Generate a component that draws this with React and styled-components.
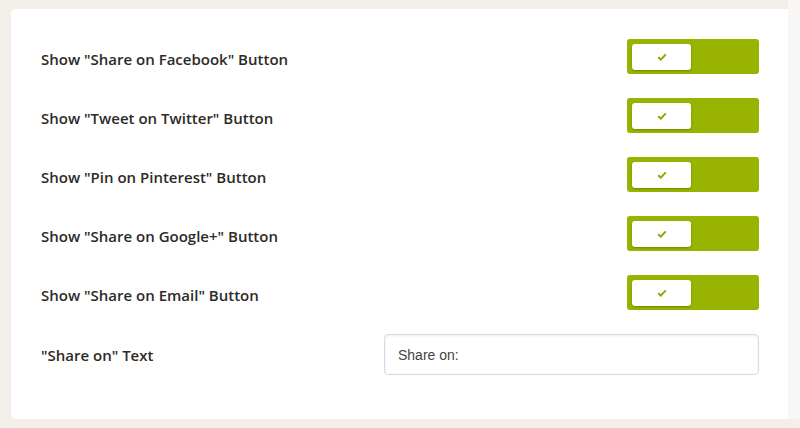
import React from 'react';
import styled, { createGlobalStyle } from 'styled-components';

const Global = createGlobalStyle`
  html, body {
    margin: 0;
    padding: 0;
    background: #f3f0ea;
  }
  body {
    font-family: "Open Sans", "Liberation Sans", sans-serif;
  }
`;

const Page = styled.div`
  display: flex;
  padding: 9px 0 9px 11px;
  min-height: 428px;
  box-sizing: border-box;
`;

const Card = styled.div`
  flex: 0 0 777px;
  background: #fff;
  border-radius: 5px 0 0 5px;
  padding: 30px 29px 44px 30px;
  box-sizing: border-box;
  display: flex;
  flex-direction: column;
  gap: 24px;
`;

const Gutter = styled.div`
  flex: 1;
  background: #f9f7f5;
  margin: -9px 0 0 0;
  height: 419px;
`;

const Label = styled.div`
  font-size: 15px;
  font-weight: 600;
  color: #2e2a26;
  padding-top: 5px;
`;

const Row = styled.div`
  display: flex;
  align-items: center;
  justify-content: space-between;
  height: ${p => (p.$tall ? 41 : 35)}px;

  ${Label} {
    padding-top: ${p => (p.$tall ? 0 : 5)}px;
  }
`;

const Toggle = styled.button`
  width: 132px;
  height: 35px;
  border: none;
  border-radius: 3px;
  background: #98b300;
  padding: 4px 5px;
  display: flex;
  align-items: center;
  cursor: pointer;
`;

const Knob = styled.span`
  width: 59px;
  height: 26px;
  background: #fff;
  border-radius: 3px;
  box-shadow: 0 1px 2px rgba(0, 0, 0, 0.25);
  display: flex;
  align-items: center;
  justify-content: center;
`;

const TextInput = styled.input`
  width: 375px;
  height: 41px;
  box-sizing: border-box;
  border: 1px solid #dadada;
  border-radius: 4px;
  box-shadow: inset 0 1px 3px rgba(0, 0, 0, 0.07);
  padding: 0 13px;
  font-family: "Liberation Sans", Arial, sans-serif;
  font-size: 14px;
  color: #444;
  outline: none;
`;

const Check = () => (
  <svg width="10" height="8" viewBox="0 0 10 8">
    <path d="M1.2 4.2 L3.8 6.6 L8.8 1.4" fill="none" stroke="#8aa800" strokeWidth="2" />
  </svg>
);

const items = [
  'Show "Share on Facebook" Button',
  'Show "Tweet on Twitter" Button',
  'Show "Pin on Pinterest" Button',
  'Show "Share on Google+" Button',
  'Show "Share on Email" Button',
];

export default function App() {
  return (
    <>
      <Global />
      <Page>
        <Card>
          {items.map(t => (
            <Row key={t}>
              <Label>{t}</Label>
              <Toggle>
                <Knob>
                  <Check />
                </Knob>
              </Toggle>
            </Row>
          ))}
          <Row $tall>
            <Label>"Share on" Text</Label>
            <TextInput defaultValue="Share on:" />
          </Row>
        </Card>
        <Gutter />
      </Page>
    </>
  );
}
